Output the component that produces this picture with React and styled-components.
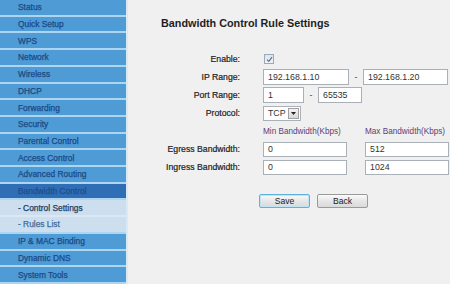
import React from "react";
import styled, { createGlobalStyle } from "styled-components";

const Global = createGlobalStyle`
  html, body { margin: 0; padding: 0; background: #f0f0f0; }
  body { width: 450px; height: 284px; overflow: hidden; font-family: "Liberation Sans", Arial, sans-serif; }
`;

const Page = styled.div`
  display: flex;
  width: 450px;
  height: 284px;
  background: #f0f0f0;
`;

const Sidebar = styled.nav`
  display: flex;
  flex-direction: column;
  width: 126px;
  height: 284px;
  border-right: 2px solid #d9eaf6;
  background: #4e9bd6;
  flex-shrink: 0;
`;

const bgFor = {
  main: "#4e9bd6",
  active: "#2f6db4",
  sub: "#cddfee",
  subdim: "#cddfee",
};
const fgFor = {
  main: "#1b4a86",
  active: "#1f4f8e",
  sub: "#1f3d63",
  subdim: "#3e6d9d",
};
const sepFor = {
  main: "#acd5f2",
  active: "#acd5f2",
  sub: "#dbe8f3",
  subdim: "#acd5f2",
};

const NavItem = styled.div`
  display: flex;
  align-items: center;
  box-sizing: border-box;
  height: calc(284px / 17);
  padding-left: 18px;
  background: ${(p) => bgFor[p.$kind]};
  border-bottom: 2px solid ${(p) => sepFor[p.$kind]};
  color: ${(p) => fgFor[p.$kind]};
  font-size: 8.4px;
  -webkit-text-stroke: 0.25px ${(p) => fgFor[p.$kind]};
  white-space: nowrap;
`;

const Main = styled.main`
  flex: 1;
  padding: 17px 0 0 33px;
`;

const Title = styled.h1`
  margin: 0 0 20px 0;
  font-size: 10.8px;
  line-height: 13px;
  font-weight: bold;
  color: #1e1e1e;
`;

const Form = styled.div`
  display: grid;
  grid-template-columns: 79px auto;
  column-gap: 23px;
  grid-auto-rows: 18px;
  align-items: center;
`;

const Label = styled.div`
  text-align: right;
  font-size: 8.7px;
  color: #222;
  -webkit-text-stroke: 0.2px #222;
  white-space: nowrap;
`;

const Controls = styled.div`
  display: flex;
  align-items: center;
  gap: ${(p) => p.$gap || 0}px;
`;

const Input = styled.div`
  box-sizing: border-box;
  width: ${(p) => p.$w}px;
  height: ${(p) => p.$h || 16}px;
  display: flex;
  align-items: center;
  padding-left: 4px;
  background: #ffffff;
  border: 1px solid #a9b0b8;
  font-size: 8.8px;
  color: #333;
`;

const Dash = styled.span`
  width: 14px;
  text-align: center;
  font-size: 8.8px;
  color: #444;
`;

const CheckBox = styled.span`
  box-sizing: border-box;
  display: inline-flex;
  align-items: center;
  justify-content: center;
  width: 10px;
  height: 10px;
  margin-left: 1px;
  border: 1px solid #9aaabd;
  background: linear-gradient(#dde4ec, #f0f3f7);
`;

const Select = styled.div`
  box-sizing: border-box;
  display: flex;
  align-items: center;
  justify-content: space-between;
  width: 38px;
  height: 15px;
  padding: 0 1px 0 4px;
  background: #fff;
  border: 1px solid #a9b0b8;
  font-size: 8.8px;
  color: #333;
`;

const SelectArrow = styled.span`
  box-sizing: border-box;
  display: flex;
  align-items: center;
  justify-content: center;
  width: 11px;
  height: 11px;
  background: linear-gradient(#f4f4f4, #d8d8d8);
  border: 1px solid #a0a0a0;
`;

const ColHead = styled.span`
  width: ${(p) => p.$w}px;
  font-size: 8.2px;
  color: #5c3d78;
  white-space: nowrap;
`;

const Buttons = styled.div`
  display: flex;
  gap: 7px;
  margin: 18px 0 0 98px;
`;

const Button = styled.button`
  box-sizing: border-box;
  width: 51px;
  height: 14px;
  padding: 0;
  border-radius: 2px;
  border: 1px solid ${(p) => (p.$focus ? "#5fb2dd" : "#9a9a9a")};
  box-shadow: ${(p) => (p.$focus ? "inset 0 0 0 1px #bfe3f5" : "none")};
  background: linear-gradient(#fbfbfb, #e6e6e6 50%, #dadada);
  font-family: "Liberation Sans", Arial, sans-serif;
  font-size: 8.6px;
  color: #222;
`;

const items = [
  ["Status", "main"],
  ["Quick Setup", "main"],
  ["WPS", "main"],
  ["Network", "main"],
  ["Wireless", "main"],
  ["DHCP", "main"],
  ["Forwarding", "main"],
  ["Security", "main"],
  ["Parental Control", "main"],
  ["Access Control", "main"],
  ["Advanced Routing", "main"],
  ["Bandwidth Control", "active"],
  ["- Control Settings", "sub"],
  ["- Rules List", "subdim"],
  ["IP & MAC Binding", "main"],
  ["Dynamic DNS", "main"],
  ["System Tools", "main"],
];

export default function App() {
  return (
    <Page>
      <Global />
      <Sidebar>
        {items.map(([t, k]) => (
          <NavItem key={t} $kind={k}>
            {t}
          </NavItem>
        ))}
      </Sidebar>
      <Main>
        <Title>Bandwidth Control Rule Settings</Title>
        <Form>
          <Label>Enable:</Label>
          <Controls>
            <CheckBox>
              <svg width="7" height="7" viewBox="0 0 7 7">
                <path d="M1 3.6 L2.8 5.4 L6 1.2" fill="none" stroke="#5a6e88" strokeWidth="1.1" />
              </svg>
            </CheckBox>
          </Controls>

          <Label>IP Range:</Label>
          <Controls>
            <Input $w={86}>192.168.1.10</Input>
            <Dash>-</Dash>
            <Input $w={85}>192.168.1.20</Input>
          </Controls>

          <Label>Port Range:</Label>
          <Controls>
            <Input $w={41}>1</Input>
            <Dash>-</Dash>
            <Input $w={44}>65535</Input>
          </Controls>

          <Label>Protocol:</Label>
          <Controls>
            <Select>
              TCP
              <SelectArrow>
                <svg width="5" height="3" viewBox="0 0 5 3">
                  <path d="M0 0 H5 L2.5 3 Z" fill="#222" />
                </svg>
              </SelectArrow>
            </Select>
          </Controls>

          <Label />
          <Controls>
            <ColHead $w={102}>Min Bandwidth(Kbps)</ColHead>
            <ColHead $w={90}>Max Bandwidth(Kbps)</ColHead>
          </Controls>

          <Label>Egress Bandwidth:</Label>
          <Controls $gap={18}>
            <Input $w={84} $h={15}>0</Input>
            <Input $w={84} $h={15}>512</Input>
          </Controls>

          <Label>Ingress Bandwidth:</Label>
          <Controls $gap={18}>
            <Input $w={84} $h={15}>0</Input>
            <Input $w={84} $h={15}>1024</Input>
          </Controls>
        </Form>
        <Buttons>
          <Button $focus>Save</Button>
          <Button>Back</Button>
        </Buttons>
      </Main>
    </Page>
  );
}
